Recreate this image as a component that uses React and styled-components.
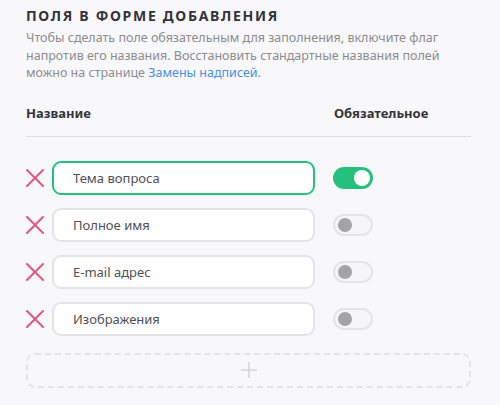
import React from 'react'
import styled, { createGlobalStyle } from 'styled-components'

const GlobalStyle = createGlobalStyle`
    body {
        margin: 0;
        background: #f8f8fa;
        font-family: "Noto Sans", "Open Sans", sans-serif;
    }
`

const Page = styled.div`
    width: 445px;
    padding: 6px 0 0 26px;
`

const Title = styled.h2`
    margin: 0;
    font-size: 14px;
    line-height: 20px;
    font-weight: 700;
    letter-spacing: 1.7px;
    color: #333338;
`

const Description = styled.p`
    margin: 3px 0 0;
    font-size: 12.5px;
    line-height: 17.5px;
    color: #8c8c90;
`

const Link = styled.a`
    color: #4a8fe0;
    text-decoration: none;
`

const Header = styled.div`
    display: grid;
    grid-template-columns: 308px 1fr;
    margin-top: 22px;
    padding-bottom: 14px;
    border-bottom: 1px solid #dedee2;
    font-size: 13px;
    line-height: 18px;
    font-weight: 700;
    color: #333338;
`

const List = styled.div`
    display: flex;
    flex-direction: column;
    gap: 13px;
    margin-top: 24px;
`

const Row = styled.div`
    display: grid;
    grid-template-columns: 26px 263px 18px 40px;
    align-items: center;
`

const Remove = styled.button`
    display: flex;
    align-items: center;
    justify-content: flex-start;
    width: 26px;
    height: 34px;
    padding: 0;
    border: none;
    background: none;
    cursor: pointer;
`

const Field = styled.input`
    box-sizing: border-box;
    width: 263px;
    height: 34px;
    padding: 0 19px;
    border: 2px solid ${p => (p.$active ? '#25c07c' : '#e4e4e8')};
    border-radius: 9px;
    background: #fff;
    font-family: inherit;
    font-size: 13px;
    color: #505055;
    outline: none;
`

const Toggle = styled.span`
    grid-column: 4;
    box-sizing: border-box;
    display: flex;
    align-items: center;
    justify-content: ${p => (p.$on ? 'flex-end' : 'flex-start')};
    width: 40px;
    height: 22px;
    padding: 0 3px;
    border-radius: 11px;
    border: ${p => (p.$on ? 'none' : '2px solid #e4e4e8')};
    background: ${p => (p.$on ? '#25c07c' : '#f6f6f8')};
`

const Knob = styled.span`
    width: ${p => (p.$on ? 16 : 14)}px;
    height: ${p => (p.$on ? 16 : 14)}px;
    border-radius: 50%;
    background: ${p => (p.$on ? '#fff' : '#a4a4a8')};
`

const AddBox = styled.button`
    display: flex;
    align-items: center;
    justify-content: center;
    width: 445px;
    height: 35px;
    margin-top: 17px;
    padding: 0;
    border: 2px dashed #e4e4e8;
    border-radius: 9px;
    background: none;
    cursor: pointer;
`

const fields = [
    { name: 'Тема вопроса', required: true },
    { name: 'Полное имя', required: false },
    { name: 'E-mail адрес', required: false },
    { name: 'Изображения', required: false },
]

const Cross = () => (
    <svg width="18" height="18" viewBox="0 0 18 18">
        <path d="M1 1 L17 17 M17 1 L1 17" stroke="#e2577f" strokeWidth="2" strokeLinecap="round" />
    </svg>
)

const Plus = () => (
    <svg width="18" height="18" viewBox="0 0 18 18">
        <path d="M9 1 V17 M1 9 H17" stroke="#d4d4d8" strokeWidth="1.5" />
    </svg>
)

export default function App() {
    return (
        <>
            <GlobalStyle />
            <Page>
                <Title>ПОЛЯ В ФОРМЕ ДОБАВЛЕНИЯ</Title>
                <Description>
                    Чтобы сделать поле обязательным для заполнения, включите флаг напротив его
                    названия. Восстановить стандартные названия полей можно на странице{' '}
                    <Link href="#">Замены надписей</Link>.
                </Description>
                <Header>
                    <span>Название</span>
                    <span>Обязательное</span>
                </Header>
                <List>
                    {fields.map((f, i) => (
                        <Row key={f.name}>
                            <Remove><Cross /></Remove>
                            <Field defaultValue={f.name} $active={i === 0} />
                            <Toggle $on={f.required}><Knob $on={f.required} /></Toggle>
                        </Row>
                    ))}
                </List>
                <AddBox><Plus /></AddBox>
            </Page>
        </>
    )
}
